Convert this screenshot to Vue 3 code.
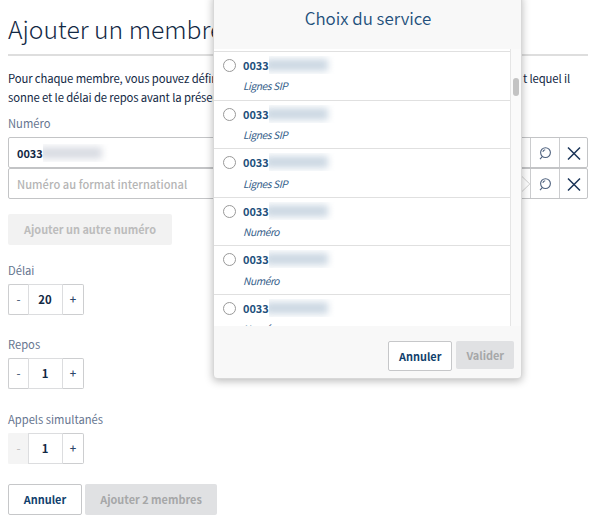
<script setup>
import { ref } from 'vue'

const services = [
  { prefix: '0033', type: 'Lignes SIP' },
  { prefix: '0033', type: 'Lignes SIP' },
  { prefix: '0033', type: 'Lignes SIP' },
  { prefix: '0033', type: 'Numéro' },
  { prefix: '0033', type: 'Numéro' },
  { prefix: '0033', type: 'Numéro' },
]
const numbers = [{ prefix: '0033' }, { prefix: '' }]
const steppers = ref([
  { label: 'Délai', value: 20, min: 0 },
  { label: 'Repos', value: 1, min: 0 },
  { label: 'Appels simultanés', value: 1, min: 1 },
])
</script>

<template>
  <div class="page">
    <h1 class="title">Ajouter un membre</h1>
    <div class="intro">
      <div class="intro-line"><span>Pour chaque membre, vous pouvez défin</span><span class="intro-end">t lequel il</span></div>
      <div class="intro-line"><span>sonne et le délai de repos avant la présen</span></div>
    </div>

    <div class="label numero">Numéro</div>
    <div v-for="(n, i) in numbers" :key="i" class="input-row">
      <div class="field">
        <template v-if="n.prefix"><b class="digits">{{ n.prefix }}</b><span class="mask"><i class="smudge"></i></span></template>
        <span v-else class="placeholder">Numéro au format international</span>
      </div>
      <div class="cell">
        <svg width="14" height="16" viewBox="0 0 14 16"><circle cx="7.5" cy="7.6" r="4.9" /><path d="M4.5 11.3 L2 14.2 M4.8 6.9 Q5.4 5.1 7.2 4.8" /></svg>
      </div>
      <div class="cell last">
        <svg class="cross" width="14" height="14" viewBox="0 0 14 14"><path d="M1 1.5 L13 13.5 M13 1.5 L1 13.5" /></svg>
      </div>
      <svg v-if="i === 1" class="arrow" width="9" height="16" viewBox="0 0 9 16"><path d="M0 .5 L7.8 8 L0 15.5" /></svg>
    </div>

    <button class="btn add">Ajouter un autre numéro</button>

    <div v-for="s in steppers" :key="s.label" class="group">
      <div class="label">{{ s.label }}</div>
      <div class="stepper">
        <span class="step minus" :class="{ off: s.value <= s.min }">-</span>
        <span class="value">{{ s.value }}</span>
        <span class="step plus">+</span>
      </div>
    </div>

    <div class="actions">
      <button class="btn outline">Annuler</button>
      <button class="btn disabled">Ajouter 2 membres</button>
    </div>

    <section class="modal">
      <h2>Choix du service</h2>
      <div class="body">
        <div class="list">
          <div v-for="(s, i) in services" :key="i" class="item">
            <span class="radio"></span>
            <div>
              <div class="number"><b class="digits">{{ s.prefix }}</b><span class="mask"><i class="smudge"></i></span></div>
              <em>{{ s.type }}</em>
            </div>
          </div>
        </div>
        <div class="track"><div class="thumb"></div></div>
      </div>
      <footer>
        <button class="btn outline">Annuler</button>
        <button class="btn disabled">Valider</button>
      </footer>
    </section>
  </div>
</template>

<style>
body { background: #fff; }
</style>

<style scoped>
* { box-sizing: border-box; }
.page {
  position: relative;
  width: 595px;
  height: 522px;
  padding: 0 7px 0 8px;
  overflow: hidden;
  font-family: "Noto Sans CJK SC", "Noto Sans", sans-serif;
  font-size: 11.35px;
  color: #122844;
}
.title {
  margin: 0;
  height: 56px;
  padding-top: 9px;
  line-height: 38px;
  font-size: 24.7px;
  font-weight: 300;
  white-space: nowrap;
  border-bottom: 2px solid #dedede;
}
.intro { padding-top: 13px; font-size: 11.3px; letter-spacing: -.12px; }
.intro-line {
  display: flex;
  justify-content: space-between;
  height: 18.5px;
  line-height: 18.5px;
  white-space: nowrap;
}
.intro-end { padding-right: 18px; }
.label { height: 20px; line-height: 20px; font-size: 11.2px; color: #66758f; }
.numero { margin-top: 7px; margin-bottom: 4px; }
.input-row {
  position: relative;
  display: flex;
  width: 580px;
  height: 31px;
  border: 1px solid #c3c4c6;
  border-radius: 2px;
}
.field { flex: 1; display: flex; align-items: center; padding-left: 8px; }
.digits { width: 25.5px; font-size: 10.9px; font-weight: 700; }
.placeholder { font-size: 11.1px; letter-spacing: .04px; color: #b5b5b5; font-weight: 500; }
.cell {
  width: 29px;
  display: flex;
  align-items: center;
  justify-content: center;
  border-left: 1px solid #cccdcf;
}
.cell.last { width: 28px; }
.cell svg { fill: none; stroke: #4e617e; stroke-width: 1.1; }
.cell .cross { stroke: #1b3559; stroke-width: 1.5; }
.arrow { position: absolute; left: 513px; top: 7px; fill: #fff; stroke: #d0d0d0; }
.mask {
  width: 66px;
  height: 18px;
  display: flex;
  align-items: center;
  overflow: hidden;
}
.smudge { flex: none; width: 63px; height: 12px; margin-left: -4px; background: #d9dce3; filter: blur(3.5px); }
.btn {
  display: flex;
  align-items: center;
  justify-content: center;
  padding: 0 0 1px;
  border: 0;
  border-radius: 2px;
  font: bold 10.9px "Noto Sans CJK SC", sans-serif;
  white-space: nowrap;
}
.add { width: 164px; height: 31px; margin-top: 15px; background: #f2f2f2; color: #bcbcbc; }
.group { height: 74.3px; }
.add + .group { margin-top: 15px; }
.group .label { margin-bottom: 4px; }
.stepper { display: flex; width: 76px; height: 31px; line-height: 29px; text-align: center; }
.step { width: 21px; border: 1px solid #cdced0; color: #526580; font-weight: 500; }
.minus { border-right: 0; border-radius: 2px 0 0 2px; width: 20px; }
.plus { border-left: 0; border-radius: 0 2px 2px 0; color: #2c4669; }
.step.off { background: #f4f4f4; border-color: #f4f4f4; color: #c0c0c0; }
.value { width: 35px; padding-right: 1px; border: 1px solid #dcdddf; font-weight: 700; }
.actions { display: flex; gap: 3px; margin-top: 1.6px; }
.outline { width: 74px; height: 31px; border: 1px solid #c6c7c9; background: #fff; color: #113f6d; }
.disabled { width: 132px; height: 31px; background: #e0e1e3; color: #a6a7a8; }
.modal {
  position: absolute;
  left: 213px;
  top: -6px;
  width: 309px;
  height: 385px;
  background: #f8f8f8;
  border: 1px solid #d8d8d8;
  border-radius: 4px;
  box-shadow: 0 2px 9px rgba(0, 0, 0, .28);
  color: #224f7b;
  overflow: hidden;
}
.modal h2 {
  margin: 0;
  height: 54px;
  padding: 10px 0 0 1px;
  line-height: 26px;
  font-size: 16.9px;
  font-weight: 350;
  text-align: center;
}
.body { display: flex; height: 277px; background: #fff; }
.list { width: 296px; padding-top: 2px; overflow: hidden; }
.item { display: flex; height: 48.6px; padding: 4px 0 0 9px; border-top: 1px solid #e0e0e0; }
.radio {
  width: 13px;
  height: 13px;
  margin: 3px 7px 0 0;
  border: 1px solid #999;
  border-radius: 50%;
  background: #fff;
}
.number { display: flex; height: 18px; align-items: center; }
.number .smudge { background: #ccd8e3; }
em { display: block; margin-top: 4.4px; line-height: 16px; font-size: 10.2px; letter-spacing: -.42px; color: #35608a; }
.track { flex: 1; padding: 29px 0 0 2px; border-left: 1px solid #e5e5e5; background: #fafafa; }
.thumb { width: 6px; height: 18px; border-radius: 3px; background: #c3c3c3; }
footer { display: flex; gap: 4px; padding: 15px 7px 0 174px; }
footer .outline { width: 65px; height: 30px; }
footer .disabled { width: 58px; height: 28px; }
</style>
